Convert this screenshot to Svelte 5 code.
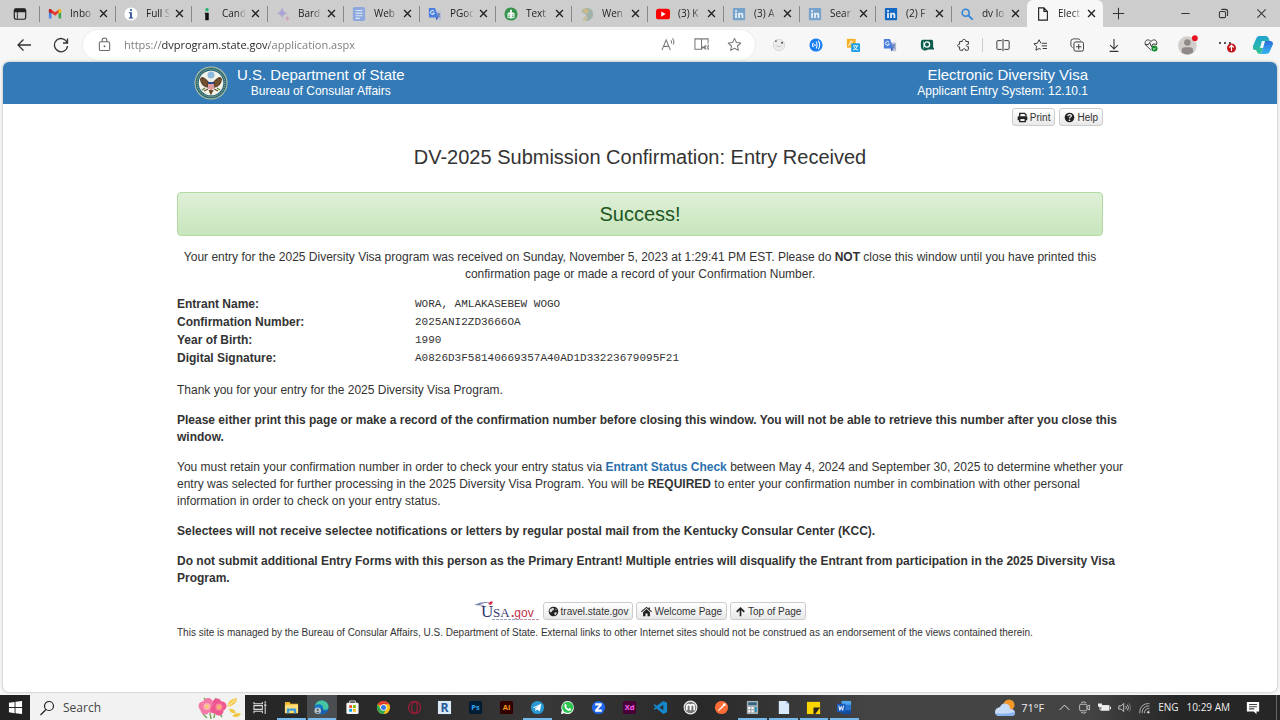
<script>
  const letterTile = (bg, fg, text, extra = '') =>
    `<rect x="1" y="1" width="14" height="14" rx="2" fill="${bg}" ${extra}/><text x="8" y="11" text-anchor="middle" font-family="Open Sans, sans-serif" font-weight="700" font-size="8" fill="${fg}">${text}</text>`;

  const linkedin = (bg) =>
    `<rect x="1" y="1" width="14" height="14" rx="1" fill="${bg}"/><g fill="#e8f1f8"><circle cx="4.6" cy="4.6" r="1.2"/><path d="M3.6 6.6h2v6h-2zM7 6.6h1.9v.8c1-1.400 4-1.300 4 1.600v3.600h-2V9.400c0-1.600-1.900-1.400-1.900 0v3.200H7z"/></g>`;

  const translate = `<path d="M7 5h8v10H9z" fill="#b9c2d8"/><path d="M1 1h7l4 11H1z" fill="#4a7fe0"/><path d="M10 8h4M12 7v1M13 8c0 2-1 3-3 4M11 9l3 3" stroke="#5a73a8" fill="none"/><path d="M7 5a2.200 2.200 0 1 0 .2 2H5.300" fill="none" stroke="#fff" stroke-width="1.1"/><path d="M9 12h3l-2.500 3z" fill="#3458b8"/>`;

  const tabs = [
    { name: 'Inbo', icon: '<path d="M1 13V4l3 2v7z" fill="#4a86e8"/><path d="M15 13V4l-3 2v7z" fill="#36a853"/><path d="M1 4c0-2 2-2 3-1l4 3 4-3c1-1 3-1 3 1L8 10z" fill="#e5382c"/><path d="M12 3c1-1 3-1 3 1v2l-3 2z" fill="#f5bb18"/><path d="M1 4c0-2 2-2 3-1v5L1 6z" fill="#c5221f"/>' },
    { name: 'Full S', icon: '<circle cx="8" cy="8" r="7.500" fill="#fff"/><circle cx="8" cy="3.500" r="1.300" fill="#3568b5"/><path d="M5.500 6H9v6h1.500v1h-5v-1H7V7H5.500z" fill="#284b96"/>' },
    { name: 'Cand', icon: '<circle cx="8" cy="3" r="2" fill="#21b573"/><path d="M5.500 6.500H10V15H6V8h-.5z" fill="#111"/>' },
    { name: 'Bard', icon: '<path d="M7 0q.8 6 6 7-5.200 1-6 6-1-5-6-6 5-1 6-7z" fill="#aaa4d4"/><path d="M13 10q.4 2.500 3 3-2.600.5-3 3-.5-2.500-3-3 2.500-.5 3-3z" fill="#d3a4b7"/>' },
    { name: 'Web', icon: '<rect x="1" y="0" width="14" height="16" rx="2" fill="#8ca8df"/><path d="M4 4h8M4 7h8M4 10h8M4 13h5" stroke="#dce5f6" stroke-width="1.300"/>' },
    { name: 'PGoc', icon: translate },
    { name: 'Text', icon: '<circle cx="8" cy="8" r="7.500" fill="#36934b"/><path d="M4 7q4-2 8 0v5q-4 2-8 0zM7 3h2v3H7z" fill="#fff"/><path d="M5 9h2M9 9h2M5 11h2M9 11h2" stroke="#36934b"/>' },
    { name: 'Wen', icon: '<path d="M2 4c4-5 13-3 13 4 0 6-5 8-8 8 2-4 1-6-1-8S2 7 2 4z" fill="#9fb3a8"/><path d="M2 4c3-3 7-2 8 0L8 8z" fill="#ccba86"/><path d="M7 16c2-2 2-5 0-6-2 1-4 3-4 5z" fill="#c7bd9e"/>' },
    { name: '(3) K', icon: '<rect x="0" y="2" width="16" height="12" rx="3" fill="#f00"/><path d="m6 5 5 3-5 3z" fill="#fff"/>' },
    { name: '(3) A', icon: linkedin('#76a2cb') },
    { name: 'Sear', icon: linkedin('#76a2cb') },
    { name: '(2) F', icon: linkedin('#1268c3') },
    { name: 'dv lo', icon: '<circle cx="6.500" cy="6.500" r="4" fill="none" stroke="#2c83d8" stroke-width="1.800"/><path d="m9.500 9.500 5 5" stroke="#2c83d8" stroke-width="2"/>' },
    { name: 'Elect', active: true, icon: '<path d="M3 1h6l4 4v10H3zM9 1v4h4" fill="none" stroke="#222" stroke-width="1.300"/>' }
  ];

  const extensions = [
    { name: 'Cookie extension', icon: '<circle cx="8" cy="8" r="6.500" fill="#ececec" stroke="#d4d4d4"/><circle cx="4.500" cy="3.500" r="1" fill="#555"/><circle cx="11.500" cy="5.500" r="1.200" fill="#555"/><path d="M5 9q3 2 6 0" stroke="#bbb" fill="none"/>' },
    { name: 'Read aloud extension', icon: '<circle cx="8" cy="8" r="7.500" fill="#167df5"/><path d="M5 5.500q-2 2.500 0 5M8 4q2.500 4 0 8M10.500 3q3.500 5 0 10" stroke="#fff" fill="none" stroke-width="1.200"/><circle cx="6.800" cy="8" r="1" fill="#fff"/>' },
    { name: 'Translator extension', icon: '<rect x="1" y="1" width="10" height="10" fill="#f8b123"/><path d="m3 9 3-6 3 6M4 7h4" stroke="#fff" fill="none"/><rect x="6" y="6" width="10" height="10" rx="1" fill="#1d9de4"/><path d="M8 9h6M11 8v1M13 9q-1 4-5 5M9 10q1 3 5 4" stroke="#fff" fill="none"/>' },
    { name: 'Google Translate', icon: translate },
    { name: 'Capture extension', icon: '<path d="M3 2h10q2 0 2 2v7h1v2H9q-2 2-5 1-3-1-3-4V5q0-3 2-3z" fill="#0b5c4c"/><circle cx="8" cy="7.500" r="3" fill="none" stroke="#fff" stroke-width="1.500"/><path d="M4 4v8" stroke="#9fd7c7"/>' },
    { name: 'Extensions', icon: '<path d="M3 4h3c-.8-3.200 4.800-3.200 4 0h3v3.200c-3-.6-3 3.200 0 2.700V13q0 1-1 1H9.700c.6-2.400-3.500-2.400-3 0H4q-1 0-1-1v-2.800C0 10.800 0 6.500 3 7.200z" fill="none" stroke="#333" stroke-width="1.100"/>' }
  ];

  const tools = [
    { name: 'Split screen', icon: '<path d="M6.500 3H2Q1 3 1 4v8q0 1 1 1h4.500M9.500 3H14q1 0 1 1v8q0 1-1 1H9.500M8 1v14" fill="none" stroke="#333" stroke-width="1.100"/>' },
    { name: 'Favorites', icon: '<path d="m9 6-2-4-2 4-4 .6 3 3L3.400 14 7 12l2 1M10 6h6M10 9h6M11 12h5" fill="none" stroke="#333" stroke-width="1.100" stroke-linejoin="round"/>' },
    { name: 'Collections', icon: '<path d="M3 11Q1 10 1 8V4q0-3 3-3h5q2 0 3 2" fill="none" stroke="#333"/><rect x="4.500" y="4.500" width="11" height="10.500" rx="2" fill="none" stroke="#333" stroke-width="1.100"/><path d="M10 7v6M7 10h6" stroke="#333" stroke-width="1.100"/>' },
    { name: 'Downloads', icon: '<path d="M8 1v11M3.500 8 8 12.500 12.500 8M3 15.300h10" fill="none" stroke="#333" stroke-width="1.200"/>' },
    { name: 'Browser essentials', icon: '<path d="M8 14 2 8C-.5 4 4-.5 8 4c4-4.500 8.500 0 6 4M1 7.500h4L6.500 5l2 5L10 7h4" fill="none" stroke="#333" stroke-width="1.100"/><circle cx="12" cy="12" r="3.500" fill="#138a2b"/><path d="m10.300 12 1.200 1.200 2-2.200" fill="none" stroke="#fff"/>' }
  ];

  const details = [
    ['Entrant Name:', 'WORA, AMLAKASEBEW WOGO'],
    ['Confirmation Number:', '2025ANI2ZD3666OA'],
    ['Year of Birth:', '1990'],
    ['Digital Signature:', 'A0826D3F58140669357A40AD1D33223679095F21']
  ];

  const apps = [
    { name: 'Task View', icon: '<path d="M1 2v2h9V2M1 14v-2h9v2M1 6h9v4H1zM13 1v3M13 7v8" fill="none" stroke="#ddd" stroke-width="1.100"/><rect x="12" y="4.500" width="2.200" height="2.200" fill="#ddd"/>' },
    { name: 'File Explorer', open: true, icon: '<path d="M1 2h5l1 2h8v10H1z" fill="#f5b929"/><path d="M1 5h14v9H1z" fill="#ffdd78"/><path d="M3 14V9h10v5h-2.500v-2.500h-5V14z" fill="#3c9de0"/>' },
    { name: 'Microsoft Edge', open: true, current: true, icon: '<circle cx="8" cy="8" r="7.500" fill="#1579c9"/><path d="M1 6C3-2 15-1 15.500 7c0 4-5 4-6 2 1-4-4-6-8.500-3z" fill="#45c6a0"/><path d="M9 9c1 3 4 3 6 2-2 5-7 5-9 2-2-2 0-6 3-4z" fill="#1b5fa8"/><circle cx="4" cy="11.500" r="3.500" fill="#b9c5ce"/><circle cx="4" cy="10.500" r="1.200" fill="#536069"/><path d="M2 14q2-3 4 0z" fill="#536069"/>' },
    { name: 'Microsoft Store', icon: '<path d="M5 4V1h6v3" fill="none" stroke="#ddd"/><rect x="1.500" y="3" width="13" height="12" rx="1.500" fill="#f6f6f6"/><path d="M4.500 5.500h3v3h-3z" fill="#f25022"/><path d="M8.500 5.500h3v3h-3z" fill="#7fba00"/><path d="M4.500 9.500h3v3h-3z" fill="#00a4ef"/><path d="M8.500 9.500h3v3h-3z" fill="#ffb900"/>' },
    { name: 'Chrome', icon: '<circle cx="8" cy="8" r="7" fill="#fbc116"/><path d="M8 8 1.940 4.500A7 7 0 0 1 14.060 4.500H8z" fill="#e33b2e"/><path d="M1.940 4.500A7 7 0 0 0 8 15l3-5.300H5z" fill="#31a852"/><circle cx="8" cy="8" r="3.500" fill="#fff"/><circle cx="8" cy="8" r="2.700" fill="#3879e8"/>' },
    { name: 'Opera', icon: '<circle cx="8" cy="8" r="6.500" fill="none" stroke="#9c1d38" stroke-width="1.300"/><ellipse cx="8" cy="8" rx="3" ry="6" fill="none" stroke="#9c1d38" stroke-width="1.300"/>' },
    { name: 'Revit', icon: '<path d="M1 1h14v14H1z" fill="#dce8f4"/><text x="8" y="13" text-anchor="middle" font-family="Open Sans, sans-serif" font-weight="700" font-size="13" fill="#25599b">R</text>' },
    { name: 'Photoshop', icon: letterTile('#001d34', '#35a6f5', 'Ps') },
    { name: 'Illustrator', icon: letterTile('#300', '#f79a13', 'Ai') },
    { name: 'Telegram', open: true, icon: '<circle cx="8" cy="8" r="7" fill="#2799d5"/><path d="m3 8 9-4-1.500 8-3-2-1.500 2-.5-3 4-3-5 2.500z" fill="#fff"/>' },
    { name: 'WhatsApp', icon: '<path d="m1 15 1-4C0 7 3 1 8 1c9 0 9 14 0 14-2 0-3-.8-3-.8z" fill="#fff"/><circle cx="8.200" cy="7.800" r="6" fill="#2fc553"/><path d="M5 4.500q1-1 1.500 0l.7 1.500-.7 1q1 2 2.500 2.500l1-1 2 1q0 2-2 2C7 11.500 4 8 5 4.500z" fill="#fff"/>' },
    { name: 'Zapya', icon: '<circle cx="8" cy="8" r="7" fill="#1f66ed"/><path d="M4.500 3.500h7v2.200l-4 4.500h4v2.300h-7v-2.200l4-4.500h-4z" fill="#fff"/>' },
    { name: 'Adobe XD', icon: letterTile('#470137', '#ff61f6', 'Xd') },
    { name: 'Visual Studio Code', icon: '<path d="m11 1 4 2v10l-4 2-7.200-6L2 10.500 1 10V9l2-1.500L1 6V5l1-.5 2 1.500z" fill="#1688ca"/><path d="M11 5v6L7 8z" fill="#292a2c"/>' },
    { name: 'Mendeley', icon: '<circle cx="8" cy="8" r="6.800" fill="#777" stroke="#ececec" stroke-width="1.200"/><path d="M4 11V7q0-2 2-2t2 2v4M8 7q0-2 2-2t2 2v4" fill="none" stroke="#fff" stroke-width="1.800"/>' },
    { name: 'Postman', icon: '<circle cx="8" cy="8" r="7" fill="#ff6c37"/><path d="m4 12 1-2 5-5 1 1-5 5z" fill="#fff"/><circle cx="11" cy="5" r="1.500" fill="#fff"/>' },
    { name: 'Calculator', open: true, icon: '<path d="M2 1h12v14H2z" fill="#a8b1b5"/><path d="M3.500 2.500h9v3h-9z" fill="#2b6683"/><path d="M3.500 7.500h2v2h-2zM7 7.500h2v2H7zM3.500 11h2v2h-2zM7 11h2v2H7z" fill="#fff"/><path d="M10.500 7.500h2v5.500h-2z" fill="#198ebc"/>' },
    { name: 'Notepad', open: true, icon: '<path d="M3 1h8l3 3v11H3z" fill="#d7e9fb"/><path d="M11 1v3h3z" fill="#91b8dc"/>' },
    { name: 'Sticky Notes', open: true, icon: '<path d="M1 2h14v13H1z" fill="#fbd500"/><path d="M8 8h7l-5 7H8z" fill="#27251c"/><path d="m10 15 5-5v5z" fill="#fbd500"/>' },
    { name: 'Word', open: true, icon: '<path d="M5 1h10v14H5z" fill="#2976d1"/><path d="M5 1h10v4H5z" fill="#50a6ec"/><path d="M5 11h10v4H5z" fill="#144b9c"/><path d="M0 4h9v9H0z" fill="#185abd"/><path d="m2 6 1 5 1.500-4L6 11l1-5" fill="none" stroke="#fff"/>' }
  ];

  const tray = [
    { name: 'Show hidden icons', icon: '<path d="m2 11 6-6 6 6" fill="none" stroke="#e2e2e2" stroke-width="1.200"/>' },
    { name: 'Meet Now', icon: '<path d="M4 2q3-2 6 0M4 14q3 2 6 0" fill="none" stroke="#ddd"/><rect x="2" y="4" width="9" height="8" rx="1.500" fill="none" stroke="#ddd"/><path d="m11 7 3-2v6l-3-2" fill="none" stroke="#ddd"/>' },
    { name: 'Battery', icon: '<path d="M4 5h10v7H4z" fill="#eee"/><path d="M14.500 7H16v3h-1.500zM0 3h5v3q-1 2-2.500 2Q1 8 0 6z" fill="#eee"/><path d="M2.500 8v3H5" fill="none" stroke="#eee"/>' },
    { name: 'Volume', icon: '<path d="M1 6h3l3-3v10l-3-3H1z" fill="none" stroke="#ddd"/><path d="M9.500 6q1.500 2 0 4M11.500 4.500q3 3.500 0 7" fill="none" stroke="#ddd"/><path d="M13.500 3q4 5 0 10" fill="none" stroke="#888"/>' },
    { name: 'Network', icon: '<path d="M2 15Q2 3 14 3M5 15Q5 6 14 6M8 15q0-6 6-6M11 15q0-3 3-3" fill="none" stroke="#bbb" stroke-width="1.100"/><circle cx="13" cy="14" r="1.200" fill="#eee"/>' }
  ];

  const glyphs = {
    print: '<path d="M4 6V2h7l2 2v2" fill="none" stroke="#222" stroke-width="2"/><path d="M1 7q0-1 1-1h12q1 0 1 1v5h-2v-2H3v2H1z" fill="#222"/><path d="M4 10v4h8v-4" fill="none" stroke="#222" stroke-width="2"/>',
    help: '<circle cx="8" cy="8" r="7" fill="#222"/><path d="M5.500 6q.4-2.300 2.700-2.300c3.300 0 3.100 3 .8 3.900Q8 8 8 9.500" fill="none" stroke="#fff" stroke-width="1.800"/><circle cx="8" cy="12" r="1.200" fill="#fff"/>',
    globe: '<circle cx="8" cy="8" r="7" fill="#222"/><path d="M3.500 4q2 0 3.500-1.500L9 4 8 6 6 7 5 9H3L2 7zM10 9l3 .5-1 2.500-2 1.500-1-2.500zM11 3.500l2 2-2 .5z" fill="#ddd"/>',
    home: '<path d="m0 8 8-7 3 2.500V2h2v3.500L16 8l-1 1.200L8 3 1 9.200z" fill="#222"/><path d="m3 9 5-4.500L13 9v6H9.500v-4h-3v4H3z" fill="#222"/>',
    up: '<path d="M8 15V3M2.500 8.500 8 3l5.500 5.500" fill="none" stroke="#222" stroke-width="2.400"/>'
  };
</script>

{#snippet icon(body)}
  <svg viewBox="0 0 16 16" aria-hidden="true">{@html body}</svg>
{/snippet}

<div class="screen">
  <nav class="tab-strip" aria-label="Browser tabs">
    <button class="tab-menu" aria-label="Tab actions">
      {@render icon('<rect x="1.500" y="2" width="13" height="12" rx="2" fill="none" stroke="#222" stroke-width="1.400"/><path d="M2 2h12v4H2z" fill="#222"/><path d="M5 5v9" stroke="#222"/>')}
    </button>
    <div class="tabs">
      {#each tabs as tab}
        <div class="tab" class:active={tab.active}>
          <button class="tab-label">{@render icon(tab.icon)}<span>{tab.name}</span></button>
          <button class="tab-close" aria-label="Close tab">{@render icon('<path d="m3 3 10 10M13 3 3 13" stroke="#222" stroke-width="2"/>')}</button>
        </div>
      {/each}
    </div>
    <button class="new-tab" aria-label="New tab">{@render icon('<path d="M8 1v14M1 8h14" stroke="#333" stroke-width="1.300"/>')}</button>
    <div class="window-controls">
      <button aria-label="Minimize">{@render icon('<path d="M2 8h12" stroke="#333" stroke-width="1.500"/>')}</button>
      <button aria-label="Restore">{@render icon('<rect x="2" y="5" width="9" height="9" rx="2" fill="none" stroke="#333" stroke-width="1.500"/><path d="M5 3q0-1 2-1h4q3 0 3 3v5q0 1-1 1" fill="none" stroke="#333" stroke-width="1.500"/>')}</button>
      <button aria-label="Close">{@render icon('<path d="m2 2 12 12M14 2 2 14" stroke="#333" stroke-width="1.500"/>')}</button>
    </div>
  </nav>

  <div class="toolbar">
    <button class="nav-button" aria-label="Back">{@render icon('<path d="M15 8H2M7.500 2.500 2 8l5.500 5.500" fill="none" stroke="#333" stroke-width="1.300"/>')}</button>
    <button class="nav-button" aria-label="Refresh">{@render icon('<path d="M14.300 6A6.600 6.600 0 1 0 14.600 9M14.500 1.500V6H10" fill="none" stroke="#333" stroke-width="1.300"/>')}</button>
    <div class="address">
      {@render icon('<rect x="2.500" y="5" width="11" height="9.500" rx="1.500" fill="none" stroke="#666" stroke-width="1.100"/><path d="M5.500 5V3.500q0-2.500 2.500-2.500t2.500 2.500V5" fill="none" stroke="#666" stroke-width="1.100"/><circle cx="8" cy="9.800" r="1" fill="#666"/>')}
      <input type="text" aria-label="Address" value="https://dvprogram.state.gov/application.aspx" />
      <button aria-label="Read aloud">{@render icon('<path d="M1 14 5.500 3 10 14M2.500 10h6M10.500 3.500q1.500 1.500.5 3.500M12 1.500q3 2.500 1 6.500" fill="none" stroke="#777" stroke-width="1.100"/>')}</button>
      <button aria-label="Immersive reader">{@render icon('<path d="M8 3v10H1V2h6q1 0 1 1 0-1 1-1h6v5M8 13l1-1" fill="none" stroke="#777" stroke-width="1.100"/><path d="M8.500 10h2l2-2v6l-2-2h-2z" fill="#777"/><path d="M13.700 9q1.500 2 0 4M15 8q2 3 0 6" fill="none" stroke="#777"/>')}</button>
      <button aria-label="Add to favorites">{@render icon('<path d="m8 1.500 2 4.300 4.700.6-3.500 3.200.9 4.700L8 12l-4.100 2.300.9-4.700L1.300 6.400 6 5.800z" fill="none" stroke="#777" stroke-width="1.100" stroke-linejoin="round"/>')}</button>
    </div>
    <div class="tool-group">
      {#each extensions as item}<button aria-label={item.name}>{@render icon(item.icon)}</button>{/each}
    </div>
    <div class="tool-group divided">
      {#each tools as item}<button aria-label={item.name}>{@render icon(item.icon)}</button>{/each}
      <button class="profile" aria-label="Profile">
        {@render icon('<circle cx="7.500" cy="8.500" r="7.500" fill="#d2cecb"/><circle cx="7.500" cy="6" r="2.600" fill="#8f8a87"/><path d="M3 14v-2q0-2.300 2.500-2.300h4Q12 9.700 12 12v2q-4.500 3-9 0z" fill="#8f8a87"/><circle cx="13.500" cy="2.500" r="2.300" fill="#e81123"/>')}
      </button>
      <button class="more" aria-label="Settings and more">
        <svg viewBox="0 0 20 18" aria-hidden="true"><path d="M2 7h2M7 7h2M12 7h2" stroke="#222" stroke-width="1.600" /><circle cx="14.500" cy="12" r="4.500" fill="#c4161c" /><path d="M14.500 15V9.500M12.300 11.500l2.200-2.200 2.200 2.200" fill="none" stroke="#fff" stroke-width="1.100" /></svg>
      </button>
      <button class="copilot" aria-label="Copilot">
        <svg viewBox="0 0 20 18" aria-hidden="true">
          <defs>
            <linearGradient id="cp-left" x1="0" y1="0" x2="0.300" y2="1"><stop offset="0" stop-color="#1a9de0" /><stop offset="1" stop-color="#35c58b" /></linearGradient>
            <linearGradient id="cp-right" x1="0" y1="0" x2="0" y2="1"><stop offset="0" stop-color="#2c6ad8" /><stop offset="1" stop-color="#38b8f2" /></linearGradient>
          </defs>
          <path d="M6 0h7q2 0 3 3l1 3h-5L9 15q-1 3-3 3-2-1-3-4H2q-3 0-2-4l3-7Q4 0 6 0z" fill="url(#cp-left)" />
          <path d="M13 5h4q3 0 3 3l-3 7q-1 3-4 3H6q2 0 3-3l2-7q.5-3 2-3z" fill="url(#cp-right)" />
          <path d="M9 5h3l-2 7H7z" fill="#eef7fd" />
        </svg>
      </button>
    </div>
  </div>

  <div class="page">
    <header>
      <div class="container brand">
        <svg class="seal" viewBox="0 0 34 34" role="img" aria-label="Department of State seal">
          <circle cx="17" cy="17" r="16.500" fill="#c3c9a4" />
          <circle cx="17" cy="17" r="15.500" fill="#2d6a78" />
          <circle cx="17" cy="17" r="13.800" fill="none" stroke="#a9bd91" stroke-width="1" stroke-dasharray="1 1" />
          <circle cx="17" cy="17" r="12.300" fill="#f4f3ea" />
          <circle cx="17" cy="9" r="3.500" fill="#8db9dc" />
          <path d="M15 16 12 13l-3-2q-3 0-3 3 1 5 5 7l4 1zM19 16l3-3 3-2q3 0 3 3-1 5-5 7l-4 1z" fill="#5e4028" />
          <path d="M8 13v3M10 13v6M12 15v6M22 15v6M24 13v6M26 13v3" stroke="#a67c46" stroke-width=".6" />
          <path d="M15.500 14q1.500-3 3 0v3h-3z" fill="#efece0" />
          <path d="M14 16h6v6q-3 4-6 0z" fill="#fff" />
          <path d="M14 16h6v2h-6z" fill="#294d8c" />
          <path d="M15 18v5M17 18v6M19 18v5" stroke="#c33b3b" />
          <path d="m14 23-4 2M20 23l4 2M15 24l2 4 2-4" fill="#6a4a2c" stroke="#6a4a2c" stroke-width="1.200" />
          <path d="m8 24 3-2M26 24l-3-2" stroke="#5d8b4c" stroke-width="1.500" />
        </svg>
        <div class="department"><strong>U.S. Department of State</strong><span>Bureau of Consular Affairs</span></div>
        <div class="system"><strong>Electronic Diversity Visa</strong><span>Applicant Entry System: 12.10.1</span></div>
      </div>
    </header>

    <main class="container">
      <div class="actions">
        <button class="chip">{@render icon(glyphs.print)}Print</button>
        <button class="chip">{@render icon(glyphs.help)}Help</button>
      </div>
      <h1>DV-2025 Submission Confirmation: Entry Received</h1>
      <div class="success" role="status">Success!</div>
      <p class="intro">Your entry for the 2025 Diversity Visa program was received on Sunday, November 5, 2023 at 1:29:41 PM EST. Please do <b>NOT</b> close this window until you have printed this confirmation page or made a record of your Confirmation Number.</p>
      <dl>
        {#each details as [label, value]}
          <div><dt>{label}</dt><dd>{value}</dd></div>
        {/each}
      </dl>
      <div class="notes">
        <p>Thank you for your entry for the 2025 Diversity Visa Program.</p>
        <p><b>Please either print this page or make a record of the confirmation number before closing this window. You will not be able to retrieve this number after you close this window.</b></p>
        <p>You must retain your confirmation number in order to check your entry status via <a href="#status">Entrant Status Check</a> between May 4, 2024 and September 30, 2025 to determine whether your entry was selected for further processing in the 2025 Diversity Visa Program. You will be <b>REQUIRED</b> to enter your confirmation number in combination with other personal information in order to check on your entry status.</p>
        <p><b>Selectees will not receive selectee notifications or letters by regular postal mail from the Kentucky Consular Center (KCC).</b></p>
        <p><b>Do not submit additional Entry Forms with this person as the Primary Entrant! Multiple entries will disqualify the Entrant from participation in the 2025 Diversity Visa Program.</b></p>
      </div>
      <footer>
        <div class="links">
          <a class="usa" href="#usa" aria-label="USA.gov">
            <svg viewBox="0 0 66 22" aria-hidden="true">
              <path d="M0 5Q9 0 18 3q-8-1-12 2 4 0 6 2-5-2-12-2z" fill="#7d86ae" />
              <path d="M14 4q3-4 5-2l-2 3z" fill="#d8304c" />
              <text x="7" y="17" font-family="Liberation Serif, serif" font-size="17" fill="#30386f">U</text>
              <text x="19" y="17" font-family="Liberation Serif, serif" font-size="13" fill="#30386f">SA</text>
              <text x="37" y="17" font-family="Liberation Sans, sans-serif" font-size="12" fill="#c4314c"><tspan font-weight="700">.</tspan>gov</text>
              <path d="M18 19.500h28" stroke="#9aa1c4" stroke-dasharray="3 1" />
              <path d="M46 19.500h20" stroke="#c294a8" stroke-dasharray="3 1" />
            </svg>
          </a>
          <a class="chip" href="#travel">{@render icon(glyphs.globe)}travel.state.gov</a>
          <a class="chip" href="#welcome">{@render icon(glyphs.home)}Welcome Page</a>
          <a class="chip" href="#top">{@render icon(glyphs.up)}Top of Page</a>
        </div>
        <small>This site is managed by the Bureau of Consular Affairs, U.S. Department of State. External links to other Internet sites should not be construed as an endorsement of the views contained therein.</small>
      </footer>
    </main>
  </div>

  <div class="taskbar">
    <button class="start" aria-label="Start">{@render icon('<path d="m1 3 6-1v5.500H1zM8 1.800 15 1v6.500H8zM1 8.500h6V14l-6-1zM8 8.500h7V15l-7-.8z" fill="#fff"/>')}</button>
    <div class="search">
      {@render icon('<circle cx="10" cy="6" r="4.500" fill="none" stroke="#222" stroke-width="1.200"/><path d="m7 9.500-5.500 5.500" stroke="#222" stroke-width="1.200"/>')}
      <input type="search" aria-label="Search" placeholder="Search" />
      <svg class="flowers" viewBox="0 0 44 22" aria-hidden="true">
        <path d="M5 17 9 21M12 16l1 6M17 15l-1 6M21 16l3 4M8 4 6 1M17 5l1-4" stroke="#79a95d" stroke-width="1.500" />
        <g fill="#f37aa6"><circle cx="5" cy="9" r="4.500" /><circle cx="10" cy="6" r="5" /><circle cx="13" cy="11" r="5" /><circle cx="7" cy="13" r="4.500" /></g>
        <g fill="#ee5790"><circle cx="19" cy="6" r="4.500" /><circle cx="24" cy="9" r="4.500" /><circle cx="21" cy="14" r="4.500" /><circle cx="17" cy="12" r="4.500" /></g>
        <circle cx="9" cy="9.500" r="3.500" fill="#fcb1b7" /><circle cx="21" cy="10" r="3.500" fill="#f98ca2" />
        <circle cx="9" cy="9.500" r="1.800" fill="#f4cf65" /><circle cx="21" cy="10" r="1.800" fill="#f4be56" />
        <path d="M29 10q1-8 10-9-1 8-10 9zM31 12q5-1 7 4-6 1-7-4zM34 19q5-5 9-2-3 5-9 2z" fill="#f1c843" />
        <path d="m30 9 7-6" stroke="#fae9a0" stroke-width="1.200" />
      </svg>
    </div>
    <div class="apps">
      {#each apps as app}
        <button class:open={app.open} class:current={app.current} aria-label={app.name}>{@render icon(app.icon)}</button>
      {/each}
    </div>
    <div class="tray">
      <button class="weather">
        <svg viewBox="0 0 20 18" aria-hidden="true"><circle cx="14" cy="6" r="5.500" fill="#f5982b" /><path d="M5 17q-5 0-5-4t5-5q2-5 7-3 3 1 3 5 5 0 5 4 0 3-4 3z" fill="#c6dcf8" /><path d="M5 17q-4 0-5-3 9 2 20-1 0 4-4 4z" fill="#87b4ef" /></svg>
        71°F
      </button>
      {#each tray as item}<button class="tray-icon" aria-label={item.name}>{@render icon(item.icon)}</button>{/each}
      <button class="status">ENG</button>
      <button class="status">10:29 AM</button>
      <button class="notifications" aria-label="Notifications">{@render icon('<path d="M1 1h14v11h-3v3l-3-3H1z" fill="#fff"/><path d="M3.500 4h9M3.500 6.500h9M3.500 9h6" stroke="#444" stroke-width="1.200"/>')}</button>
      <button class="show-desktop" aria-label="Show desktop"></button>
    </div>
  </div>
</div>

<style>
  :global(body) { margin: 0; }
  .screen {
    display: flex;
    flex-direction: column;
    min-height: 100vh;
    background: #f7f7f7;
    color: #333;
    font-family: "Liberation Sans", Arial, sans-serif;
    font-size: 12px;
    line-height: 17px;
  }
  .screen :global(*) { box-sizing: border-box; }
  button { border: 0; padding: 0; margin: 0; background: none; color: inherit; font: inherit; display: flex; align-items: center; justify-content: center; }
  input { border: 0; padding: 0; outline: 0; background: none; min-width: 0; font: inherit; }
  svg { display: block; flex: none; width: 16px; height: 16px; }

  .tab-strip { display: flex; height: 27px; background: #cdcdcd; font-family: "Open Sans", "Noto Sans", sans-serif; font-size: 10px; color: #222; }
  .tab-menu { width: 39px; }
  .tab-menu svg { width: 14px; height: 14px; }
  .tabs { display: flex; flex: 0 1 1064px; min-width: 0; }
  .tab { display: flex; flex: 1 1 0; min-width: 0; align-items: center; padding: 0 5px 0 9px; background: linear-gradient(#888, #888) left center / 1px 16px no-repeat; }
  .tab.active { background: #f7f7f7; border-radius: 6px 6px 0 0; }
  .tab-label { flex: 1; min-width: 0; justify-content: flex-start; gap: 8px; }
  .tab-label svg { width: 14px; height: 14px; }
  .tab-label span { flex: 1; min-width: 0; overflow: hidden; white-space: nowrap; text-align: left; mask-image: linear-gradient(90deg, #000 60%, transparent); }
  .tab-close { width: 14px; margin-left: 2px; }
  .tab-close svg { width: 11px; height: 11px; }
  .new-tab { width: 30px; }
  .new-tab svg { width: 13px; height: 13px; }
  .window-controls { display: flex; margin-left: auto; }
  .window-controls button { width: 38px; }
  .window-controls svg { width: 11px; height: 11px; }

  .toolbar { display: flex; align-items: center; height: 35px; padding: 0 2px 0 5px; }
  .nav-button { width: 37px; }
  .address { display: flex; flex: 1; align-items: center; min-width: 0; height: 30px; margin: 0 5px 0 4px; padding: 0 4px 0 14px; border-radius: 15px; background: #fff; box-shadow: 0 0 2px #ddd; }
  .address input {
    flex: 1;
    margin-left: 12px;
    font-family: "Open Sans", "Noto Sans", sans-serif;
    font-size: 11px;
    color: transparent;
    caret-color: #222;
    background: linear-gradient(90deg, #777 38px, #222 38px, #222 145px, #777 145px);
    background-clip: text;
  }
  .address button { width: 33px; }
  .address svg { width: 15px; height: 15px; }
  .tool-group { display: flex; align-items: center; }
  .tool-group button { width: 37px; }
  .tool-group svg { width: 14px; height: 14px; }
  .divided { padding-left: 2px; background: linear-gradient(#ccc, #ccc) left center / 1px 14px no-repeat; }
  .tool-group .profile svg { width: 20px; height: 20px; }
  .tool-group .more { width: 41px; }
  .tool-group .more svg { width: 20px; height: 18px; }
  .tool-group .copilot { width: 31px; }
  .tool-group .copilot svg { width: 20px; height: 18px; }

  .page { flex: 1; margin: 0 3px; padding-bottom: 24px; overflow: hidden; border-radius: 6px; background: #fff; box-shadow: 0 0 3px #aaa; }
  header { background: #337ab7; color: #fff; }
  .container { width: 100%; max-width: 926px; margin: 0 auto; }
  .brand { display: flex; align-items: center; gap: 9px; height: 42px; padding: 0 15px 0 17px; }
  .seal { width: 34px; height: 34px; }
  .department, .system { display: flex; flex-direction: column; text-align: center; line-height: 16px; }
  .system { margin-left: auto; text-align: right; }
  header strong { font-size: 15px; font-weight: 400; }

  .actions { display: flex; justify-content: flex-end; gap: 4px; padding-top: 4px; }
  .chip { display: flex; align-items: center; gap: 2px; height: 18px; padding: 0 4px; border: 1px solid #ccc; border-radius: 3px; background: linear-gradient(#fff, #e8e8e8); color: #333; font-size: 10px; text-decoration: none; }
  .chip svg { width: 11px; height: 11px; }
  h1 { margin: 18px 0 22px; font-size: 20px; line-height: 26px; font-weight: 400; text-align: center; }
  .success { margin-bottom: 13px; padding: 8px; border: 1px solid #b2dba1; border-radius: 4px; background: linear-gradient(#dff0d8, #c8e5bc); color: #20561f; font-size: 20px; line-height: 26px; text-align: center; }
  p { margin: 0 0 13px; }
  .intro { margin-bottom: 12px; text-align: center; }
  .notes { margin-right: -24px; }
  a { color: #2a6fae; font-weight: 700; text-decoration: none; }
  a.chip, a.usa { color: #333; font-weight: 400; }
  dl { margin: 0 0 15px; line-height: 18px; }
  dl div { display: flex; }
  dt { flex: 0 0 238px; font-weight: 700; }
  dd { margin: 0; font-family: "Liberation Mono", monospace; font-size: 11px; }
  .links { display: flex; justify-content: center; align-items: center; gap: 3px; }
  .usa svg { width: 66px; height: 22px; }
  small { display: block; margin-top: 2px; font-size: 10px; }

  .taskbar { display: flex; height: 25px; margin-top: 3px; background: linear-gradient(90deg, #222 0, #292929 30%, #383838 42%, #292929 55%, #444 68%, #444 85%, #262626 92%); color: #eee; font-family: "Open Sans", "Noto Sans", sans-serif; font-size: 11px; }
  .start { width: 30px; }
  .start svg { width: 15px; height: 15px; }
  .search { display: flex; align-items: center; flex: 0 1 215px; min-width: 0; padding: 0 3px 0 9px; background: #f2f2f2; }
  .search input { flex: 1; margin-left: 8px; color: #333; font-size: 12px; }
  .search input::placeholder { color: #444; opacity: 1; }
  .search .flowers { width: 44px; height: 22px; }
  .apps { display: flex; flex: 0 1 615px; min-width: 0; }
  .apps button { flex: 1; border-bottom: 2px solid transparent; padding-top: 2px; }
  .apps .open { border-image: linear-gradient(90deg, transparent 10%, #76b9ed 10%, #76b9ed 90%, transparent 90%) 2; }
  .apps .current { background: #4b4e50; }
  .apps svg { width: 15px; height: 15px; }
  .tray { display: flex; margin-left: auto; }
  .weather { gap: 6px; margin-right: 10px; }
  .weather svg { width: 20px; height: 18px; }
  .tray-icon { width: 20px; }
  .tray-icon svg { width: 13px; height: 13px; }
  .status { padding: 0 4px; font-size: 10px; white-space: nowrap; }
  .notifications { width: 42px; padding-right: 5px; }
  .notifications svg { width: 14px; height: 14px; }
  .show-desktop { width: 4px; border-left: 1px solid #666; }
</style>
